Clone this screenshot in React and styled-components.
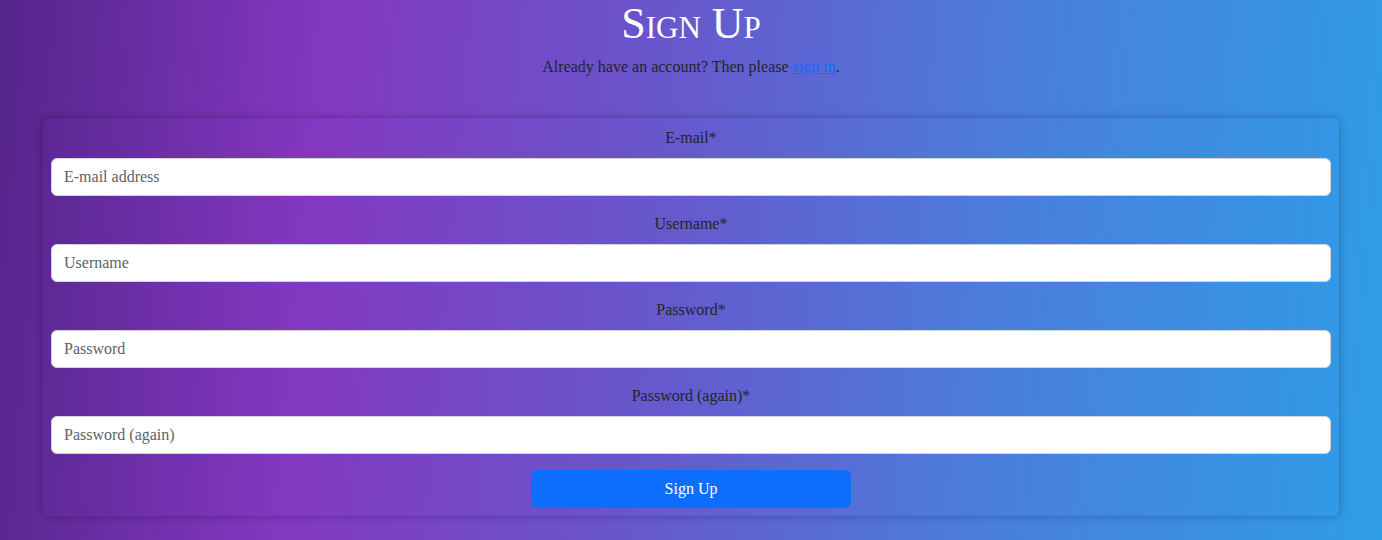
import React from "react";
import styled, { createGlobalStyle } from "styled-components";

const GlobalStyle = createGlobalStyle`
  html, body {
    margin: 0;
    padding: 0;
  }

  body {
    font-family: "Liberation Serif", "Times New Roman", serif;
    color: #212529;
  }
`;

const Page = styled.main`
  background: linear-gradient(95deg, #54258a 0%, #8338c1 23%, #6a54cb 45%, #4a7edd 72%, #2e9de7 100%);
  min-height: 100vh;
  box-sizing: border-box;
  padding: 0 43px 24px;
`;

const Title = styled.h1`
  color: #fff;
  font-size: 44px;
  font-variant: small-caps;
  font-weight: 400;
  line-height: 48px;
  margin: 0;
  text-align: center;
`;

const Lead = styled.p`
  font-size: 16px;
  line-height: 24px;
  margin: 7px 0 39px;
  text-align: center;

  a {
    color: #0d6efd;
  }
`;

const Card = styled.form`
  border-radius: 6px;
  box-shadow: 0 0 8px rgba(0, 0, 0, 0.28);
  display: flex;
  flex-direction: column;
  gap: 16px;
  padding: 8px;
`;

const Field = styled.div`
  display: flex;
  flex-direction: column;
  gap: 8px;
`;

const Label = styled.label`
  font-size: 16px;
  line-height: 24px;
  text-align: center;
`;

const Input = styled.input`
  background: #fff;
  border: 1px solid #cfd4da;
  border-radius: 6px;
  box-sizing: border-box;
  color: #212529;
  font-family: inherit;
  font-size: 16px;
  height: 38px;
  padding: 6px 12px;
  width: 100%;

  &::placeholder {
    color: #5c636a;
  }
`;

const Submit = styled.button`
  align-self: center;
  background: #0d6efd;
  border: none;
  border-radius: 6px;
  color: #fff;
  font-family: inherit;
  font-size: 16px;
  height: 38px;
  width: 320px;
`;

const fields = [
  { id: "email", label: "E-mail*", type: "email", placeholder: "E-mail address" },
  { id: "username", label: "Username*", type: "text", placeholder: "Username" },
  { id: "password1", label: "Password*", type: "password", placeholder: "Password" },
  { id: "password2", label: "Password (again)*", type: "password", placeholder: "Password (again)" },
];

export default function App() {
  return (
    <>
      <GlobalStyle />
      <Page>
        <Title>Sign Up</Title>
        <Lead>
          Already have an account? Then please <a href="#login">sign in</a>.
        </Lead>
        <Card onSubmit={(e) => e.preventDefault()}>
          {fields.map((f) => (
            <Field key={f.id}>
              <Label htmlFor={f.id}>{f.label}</Label>
              <Input id={f.id} type={f.type} placeholder={f.placeholder} />
            </Field>
          ))}
          <Submit type="submit">Sign Up</Submit>
        </Card>
      </Page>
    </>
  );
}
